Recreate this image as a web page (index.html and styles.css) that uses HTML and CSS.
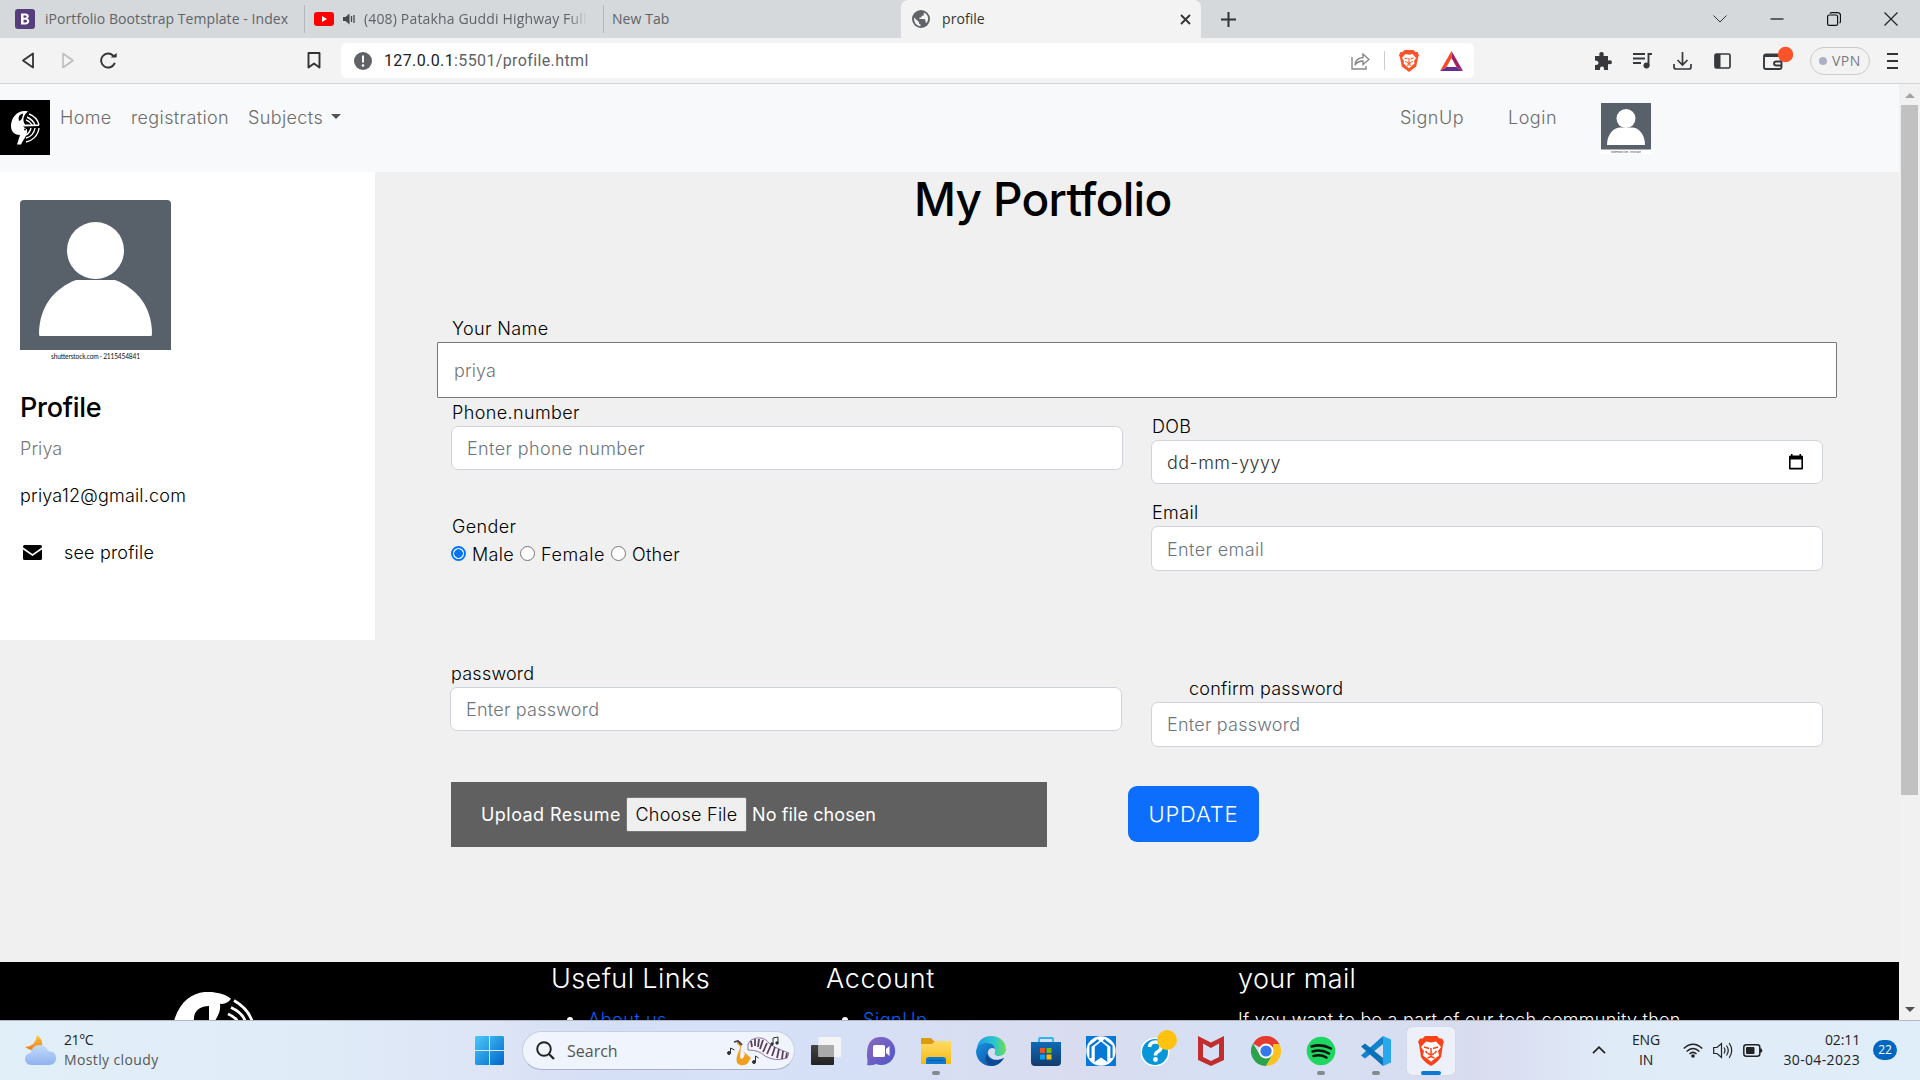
FILE: index.html
```html
<!DOCTYPE html>
<html lang="en">
<head>
<meta charset="utf-8">
<title>profile</title>
<link rel="stylesheet" href="styles.css">
</head>
<body>
<div class="tabs">
  <div class="tab tab-first">
    <svg width="20" height="20" viewBox="0 0 20 20"><rect width="20" height="20" rx="3" fill="#563d7c"/><path d="M6 4.500h4.700c3.600 0 3.900 4 1.600 5.100 3 .9 2.500 5.900-1.600 5.900H6z M8.500 6.600v2.200h2c1.500 0 1.500-2.200 0-2.200z M8.500 10.800v2.600h2.200c1.800 0 1.800-2.600 0-2.600z" fill="#fff" fill-rule="evenodd"/></svg>
    <span>iPortfolio Bootstrap Template - Index</span>
  </div>
  <div class="tab tab-video">
    <svg width="20" height="14" viewBox="0 0 20 14"><rect width="20" height="14" rx="3" fill="#f00"/><path d="M8 4l5 3-5 3z" fill="#fff"/></svg>
    <svg class="speaker" width="12" height="12" viewBox="0 0 12 12"><path d="M0 4h2.500L6.500.5v11L2.500 8H0z" fill="#45494d"/><path d="M8.500 3v6M11 2v8" stroke="#45494d" stroke-width="1.300"/></svg>
    <span class="fade">(408) Patakha Guddi Highway Full V</span>
  </div>
  <div class="tab tab-new"><span>New Tab</span></div>
  <div class="tab tab-active">
    <svg width="18" height="18" viewBox="0 0 18 18"><circle cx="9" cy="9" r="9" fill="#5f6368"/><path d="M7.500 2C6 4 9 4.500 8 6.500 7 8 5 8 5 9.500h5c1.500 0 1 2 0 2.500-1.500.8-2.500 1-2.500 4C4 15 1.800 12.300 1.800 9S4 2.700 7.500 2zM12 3q4 2 4.200 6-.2 3-2.200 5-2-1-1.500-3.500 0-2-3-2Q9 6 12 6z" fill="#f3f3f3" opacity=".0"/><path d="M2 7.500l5 4.500v1.500l1.500 1v1.800Q2.500 15.500 2 9zM12 2.500q4 2 4.200 6.200-.2 2.500-1.700 4.300l-1-.7v-2l-1-1.300H7.500V7.500h2V5.700h2z" fill="#f3f3f3"/></svg>
    <span>profile</span>
    <svg class="tab-close" width="11" height="11" viewBox="0 0 11 11"><path d="M1 1l9 9M10 1l-9 9" stroke="#333" stroke-width="1.800"/></svg>
  </div>
  <svg class="tab-plus" width="15" height="15" viewBox="0 0 15 15"><path d="M7.500 0v15M0 7.500h15" stroke="#333" stroke-width="2"/></svg>
  <div class="window-controls">
    <svg width="14" height="8" viewBox="0 0 14 8"><path d="M.5.500l6.500 6.500L13.500.5" fill="none" stroke="#333"/></svg>
    <svg width="14" height="14" viewBox="0 0 14 14"><path d="M.5 7h13" stroke="#111" stroke-width="1.200"/></svg>
    <svg width="14" height="14" viewBox="0 0 14 14"><g fill="none" stroke="#111" stroke-width="1.200"><rect x=".6" y="3" width="10" height="10.400" rx="1.500"/><path d="M3 1.500Q3.500.6 5 .6h5.500q3 0 3 3V9q0 1.500-1 2"/></g></svg>
    <svg width="14" height="14" viewBox="0 0 14 14"><path d="M.5.500l13 13M13.500.5l-13 13" stroke="#222" stroke-width="1.200"/></svg>
  </div>
</div>

<div class="toolbar">
  <svg class="t-back" width="12" height="17" viewBox="0 0 12 17"><path d="M11 1.500v14L1 8.500z" fill="none" stroke="#333" stroke-width="1.800" stroke-linejoin="round"/></svg>
  <svg class="t-forward" width="12" height="17" viewBox="0 0 12 17"><path d="M1 1.500v14l10-7z" fill="none" stroke="#bdbdbd" stroke-width="1.600" stroke-linejoin="round"/></svg>
  <svg class="t-reload" width="17" height="17" viewBox="0 0 17 17"><path d="M13 3.500A7 7 0 1 0 14.500 11.500" fill="none" stroke="#333" stroke-width="1.900" stroke-linecap="round"/><path d="M10.500 5.500H16q.7 0 .7-.7V1z" fill="#333"/></svg>
  <svg class="t-bookmark" width="14" height="17" viewBox="0 0 14 17"><path d="M1.500 1h11v14.500L7 11.500l-5.500 4z" fill="none" stroke="#333" stroke-width="1.900" stroke-linejoin="round"/></svg>
  <div class="address">
    <svg width="18" height="18" viewBox="0 0 18 18"><circle cx="9" cy="9" r="9" fill="#5f6368"/><path d="M9 3.500v7" stroke="#fff" stroke-width="2"/><circle cx="9" cy="13.500" r="1.300" fill="#fff"/></svg>
    <span class="url"><b>127.0.0.1</b>:5501/profile.html</span>
    <svg class="share" width="19" height="18" viewBox="0 0 19 18"><path d="M1 5v12h14v-3M4 13q1-7 8-7.500V2l6 5.500-6 5V9q-5 0-8 4z" fill="none" stroke="#888" stroke-width="1.400"/></svg>
    <i class="bar"></i>
    <svg width="20" height="22" viewBox="0 0 20 22"><path d="M5.500 0h9l2 2h2l1.500 3-.8 2-2 9.500L10 22l-7.200-5.500L.8 7 0 5l1.500-3h2z" fill="#fb542b"/><path d="M6.500 4l3.500.8 3.500-.8 3.500 4-2 3 .5 2.500L11.500 17 10 18.200 8.500 17l-4-3.500L5 11 3 8z" fill="#fff"/><path d="M5.500 8l3 1M14.500 8l-3 1M10 8v5M8 12.500l2 1.200 2-1.200M6.500 11l1 1.500M13.500 11l-1 1.500M8 15.500l2-1 2 1" fill="none" stroke="#fb542b" stroke-width="1.100"/></svg>
    <svg class="bat" width="23" height="20" viewBox="0 0 23 20"><path d="M11.500 0L0 20l6.500-4 5-9z" fill="#ff4724"/><path d="M11.500 0L23 20l-6.500-4-5-9z" fill="#9e1f63"/><path d="M0 20h23l-6.500-4h-10z" fill="#662d91"/></svg>
  </div>
  <svg class="t-puzzle" width="18" height="18" viewBox="0 0 18 18"><path d="M1 4h4.500q-1-4 2-4t2 4H14v4.500q4-1 4 1.800T14 12v6h-4q.5-3.500-2-3.500T6 18H1v-5q3.500.5 3.500-2T1 8.500z" fill="#36393c"/></svg>
  <svg class="t-playlist" width="19" height="17" viewBox="0 0 19 17"><path d="M0 2h12M0 6.500h12M0 11h8M15.500 14V2H19" fill="none" stroke="#36393c" stroke-width="1.900"/><circle cx="13.500" cy="13.500" r="3" fill="#36393c"/></svg>
  <svg class="t-download" width="19" height="18" viewBox="0 0 19 18"><path d="M9.500 0v12.500M4.500 8l5 5 5-5M1 12v3q0 2 2 2h13q2 0 2-2v-3" fill="none" stroke="#36393c" stroke-width="1.700"/></svg>
  <svg class="t-sidebar" width="17" height="16" viewBox="0 0 17 16"><rect x="1" y="1" width="15" height="14" rx="1.500" fill="none" stroke="#36393c" stroke-width="1.700"/><path d="M1 1h5.500v14H1z" fill="#36393c"/></svg>
  <svg class="t-wallet" width="30" height="30" viewBox="0 0 30 30"><path d="M16 8.500H3q-2 0-2 2V21q0 2 2 2h13.500q2 0 2-2v-9q0-2-2-2H2M19 15.500h-5.500q-2.500 0-2.500 2t2.500 2H19" fill="none" stroke="#36393c" stroke-width="1.900"/><circle cx="22.500" cy="8.500" r="7.700" fill="#fb542b"/></svg>
  <div class="vpn"><i></i>VPN</div>
  <svg class="t-menu" width="11" height="18" viewBox="0 0 11 18"><path d="M0 2h11M0 9h11M0 16h11" stroke="#333" stroke-width="1.800"/></svg>
</div>

<div class="viewport">
  <div class="page">
    <nav class="nav">
      <svg class="brand" width="50" height="55" viewBox="0 0 50 55"><path d="M0 0h50v55H0z"/><path d="M28 11.500c-9-2.500-17 5-17 14.500 0 6 4 9 9 9l-3 9.500h4c3-6 7-10 6-15l-4-3 16-.5v-1.500h-14c-2-3-3-8 3-13z" fill="#fff"/><path d="M19 21c-1-4 0-6.500 4-7.500 0 2-1 7-4 7.500z"/><path d="M29 14c5 2 9 6 10 11M27 17c4 2 7 5 8 8M26 20c3 1 5 3 6 5M39 28c-1 8-7 13-13 14M35 28c-1 6-5 9-9 10M31 28c-1 4-3 6-5 7" fill="none" stroke="#fff" stroke-width="1.400"/><circle cx="25" cy="29.500" r=".9"/></svg>
      <a class="n-home">Home</a>
      <a class="n-reg">registration</a>
      <a class="n-sub">Subjects</a><i class="caret"></i>
      <a class="n-signup">SignUp</a>
      <a class="n-login">Login</a>
      <svg class="nav-avatar" width="50" height="51" viewBox="0 0 50 51"><path d="M0 0h50v51H0z" fill="#fff"/><path d="M0 0h50v46.500H0z" fill="#58606a"/><circle cx="25" cy="15.500" r="9.500" fill="#fff"/><path d="M6 42C6 30 14 24.500 19 24.500h12c6 0 13 6 13 17.500z" fill="#fff"/><text x="25" y="49.500" font-size="2.200" font-weight="400" letter-spacing="0" text-anchor="middle" textLength="30" fill="#333">shutterstock.com · 2115454841</text></svg>
    </nav>
    <main class="main">
      <aside class="card">
        <svg class="photo" width="151" height="161" viewBox="0 0 151 161"><path d="M0 4q0-4 4-4h143q4 0 4 4v146H0z" fill="#58606a"/><circle cx="75.500" cy="50.500" r="28.500" fill="#fff"/><path d="M19 134c0-28 16-46 37-54h39c21 8 37 26 37 54q0 2-1 2H20q-1 0-1-2z" fill="#fff"/><text x="75.500" y="159" font-family="Lato, sans-serif" font-size="6.600" font-weight="400" letter-spacing="0" text-anchor="middle" textLength="89" fill="#111">shutterstock.com · 2115454841</text></svg>
        <h5>Profile</h5>
        <p class="muted">Priya</p>
        <p class="mail">priya12@gmail.com</p>
        <p class="see"><svg width="19" height="15" viewBox="0 0 19 15"><path d="M1.500 0h16Q19 0 19 1.500v.7L9.500 9 0 2.200v-.7Q0 0 1.500 0z"/><path d="M0 4.500l9.500 6.500L19 4.500v9q0 1.500-1.500 1.500h-16Q0 15 0 13.500z"/></svg><span>see profile</span></p>
      </aside>
      <form class="form">
        <h1>My Portfolio</h1>
        <label>Your Name</label>
        <div class="input name">priya</div>
        <div class="row row-a">
          <div>
            <label>Phone.number</label>
            <div class="input">Enter phone number</div>
            <label class="gender">Gender</label>
            <div class="radios"><i class="radio on"></i><span>Male</span><i class="radio"></i><span class="fem">Female</span><i class="radio"></i><span>Other</span></div>
          </div>
          <div class="lower">
            <label>DOB</label>
            <div class="input date"><span>dd-mm-yyyy</span><svg width="14" height="16" viewBox="0 0 14 16"><path d="M0 3q0-1.500 1-1.500h1V0h1.500v1.500h7V0H12v1.500h1q1 0 1 1.500v11.500q0 1-1 1H1q-1 0-1-1zM1.600 5.500v8.300h10.800V5.500z" fill-rule="evenodd"/></svg></div>
            <label class="email">Email</label>
            <div class="input tall">Enter email</div>
          </div>
        </div>
        <div class="row row-b">
          <div class="pw"><label>password</label><div class="input">Enter password</div></div>
          <div class="lower"><label class="confirm">confirm password</label><div class="input tall">Enter password</div></div>
        </div>
        <div class="actions">
          <div class="upload"><span class="u-label">Upload Resume</span><span class="choose">Choose File</span><span class="none">No file chosen</span></div>
          <div class="update">UPDATE</div>
        </div>
      </form>
    </main>
    <footer class="footer">
      <svg class="foot-logo" width="80" height="28" viewBox="0 0 80 28"><path d="M0 29C7 4 26-3 42 .8q9 1 15 6-4 6-11 5c1 7-2 12-5 17h-6V14c-9 0-16 5-15 15z" fill="#fff"/><path d="M60 8.500q14 8 18 20.500M57 15.500q11 5 14 13M54 22q7 3 9 6.500" fill="none" stroke="#fff" stroke-width="2.800"/></svg>
      <div class="f-links"><h4>Useful Links</h4><ul><li>About us</li></ul></div>
      <div class="f-account"><h4>Account</h4><ul><li>SignUp</li></ul></div>
      <div class="f-mail"><h4>your mail</h4><p>If you want to be a part of our tech community then</p></div>
    </footer>
  </div>
  <div class="scroll"><i class="up"></i><i class="thumb"></i><i class="down"></i></div>
</div>

<div class="taskbar">
  <svg class="weather" width="31" height="30" viewBox="0 0 31 30"><defs><linearGradient id="moon" x2="0" y2="1"><stop stop-color="#fcc93c"/><stop offset="1" stop-color="#ee7b1d"/></linearGradient><linearGradient id="cloud" x2="0" y2="1"><stop stop-color="#c4dbf8"/><stop offset="1" stop-color="#8fb2ee"/></linearGradient></defs><path d="M12 0q8 6 4 13-5 6-16-1 11-1 12-12z" fill="url(#moon)"/><path d="M6 30a6 6 0 0 1 0-12q1-8 9-8 6 0 8 6 8 0 8 7t-7 7z" fill="url(#cloud)"/></svg>
  <div class="weather-text"><span class="deg">21°C</span><span class="sky">Mostly cloudy</span></div>
  <svg class="win" width="29" height="29" viewBox="0 0 29 29"><defs><linearGradient id="win" x2="1" y2="1"><stop stop-color="#4cc8fb"/><stop offset="1" stop-color="#0067c9"/></linearGradient></defs><path d="M1 0h13v14H0V1zM15 0h13l1 1v13H15zM0 15h14v14H1l-1-1zM15 15h14v13l-1 1H15z" fill="url(#win)"/></svg>
  <div class="search">
    <svg width="19" height="19" viewBox="0 0 19 19"><circle cx="8" cy="8" r="6.800" fill="none" stroke="#222" stroke-width="1.900"/><path d="M13 13l5 5" stroke="#222" stroke-width="2.200"/></svg>
    <span>Search</span>
    <svg class="art" width="63" height="30" viewBox="0 0 63 30"><path d="M10 6q4 0 4 4l-1 11q2 5 5-3l-2-3 8 7q-2 2-3 5-3 3-8 2-5-2-3-9l3-8q0-3-3-4z" fill="#f0a01e"/><path d="M7 6l4-1 4 4" fill="none" stroke="#47394f" stroke-width="1.800"/><path d="M21 8q2-5 8-6 8-1 12 4t21 11l-2 5q-12 4-22-2-6-6-17-6z" fill="#f7f2fb" stroke="#8c78a0"/><path d="M24 5l1 6M28 3v7M32 3l-1 8M36 4l-3 9M40 7l-4 9M44 9l-4 9M48 11l-3 9M52 13l-2 9M56 15l-1 8M60 17l-1 5" stroke="#54405f" stroke-width="1.800"/><g fill="#333" stroke="#333"><circle cx="2" cy="17" r="1.500"/><path d="M3.500 17v-5l4 2" fill="none"/><circle cx="27" cy="26" r="1.500"/><path d="M28.500 26v-6l3 2" fill="none"/><circle cx="45" cy="8" r="1.200"/><circle cx="50" cy="7" r="1.200"/><path d="M46 8V2l5-1v6" fill="none"/></g></svg>
  </div>
  <div class="apps">
    <div class="app"><svg viewBox="0 0 30 30"><defs><linearGradient id="dk" x2="0" y2="1"><stop stop-color="#444"/><stop offset="1" stop-color="#222"/></linearGradient></defs><rect y="9" width="23" height="20" rx="1" fill="url(#dk)"/><rect x="7.500" y="1" width="22.500" height="20" rx="1" fill="#f4f4f4" opacity=".95"/><path d="M7.500 9H23v12H7.500z" fill="#aaa"/></svg></div>
    <div class="app"><svg viewBox="0 0 30 30"><defs><linearGradient id="ch" x2="1" y2="1"><stop stop-color="#8a68c0"/><stop offset="1" stop-color="#4f55c8"/></linearGradient></defs><path d="M15 1a14 14 0 1 1-5 27q-4 2-9 1 1-4 0-8Q0 1 15 1z" fill="url(#ch)"/><rect x="7" y="9" width="12" height="12" rx="1.500" fill="#fff"/><path d="M20 13l3.500-3v10L20 17z" fill="#fff"/></svg></div>
    <div class="app run"><svg viewBox="0 0 30 30"><defs><linearGradient id="fo" x2="0" y2="1"><stop stop-color="#ffdc67"/><stop offset="1" stop-color="#f6b912"/></linearGradient></defs><path d="M0 3q0-1 1-1h9l3 3h16q1 0 1 1v6H0z" fill="#dd9a0c"/><path d="M0 8h11l3-3h16v23H0z" fill="url(#fo)"/><path d="M5 28v-4q0-3 3-3h14q3 0 3 3v4z" fill="#0f78d0"/><path d="M8 24.500h14" stroke="#05579f"/></svg></div>
    <div class="app"><svg viewBox="0 0 30 30"><defs><linearGradient id="e1" x2="1"><stop stop-color="#1f9de4"/><stop offset=".6" stop-color="#2cc5ce"/><stop offset="1" stop-color="#6de04e"/></linearGradient><linearGradient id="e2" x2="1" y2="1"><stop stop-color="#1790e0"/><stop offset="1" stop-color="#0c4a9c"/></linearGradient></defs><path d="M1 12C2 4 8 0 15 0c9 0 15 6 15 13 0 5-4 7-7 7-4 0-5-2-4-4 2-7-9-11-18-4z" fill="url(#e1)"/><path d="M0 15C1 9 6 7 10 7c7 0 9 4 9 6-4-3-8 1-7 5 1 5 9 8 16 4-3 5-7 8-13 8C6 30 0 23 0 15z" fill="url(#e2)"/><path d="M12 18c-1 5 6 9 16 4-4 6-9 8-13 8-5-3-8-8-3-12z" fill="#0e4a94"/></svg></div>
    <div class="app"><svg viewBox="0 0 30 30"><defs><linearGradient id="st" x2="0" y2="1"><stop stop-color="#0b6bb8"/><stop offset="1" stop-color="#153a6b"/></linearGradient></defs><path d="M8 8V3q0-1 1-1h12q1 0 1 1v5" fill="none" stroke="#2cb6ef" stroke-width="1.800"/><path d="M0 6h30v20q0 4-4 4H4q-4 0-4-4z" fill="url(#st)"/><path d="M9 12h5v5H9z" fill="#f25022"/><path d="M15.500 12h5v5h-5z" fill="#7fba00"/><path d="M9 18.500h5v5H9z" fill="#00a4ef"/><path d="M15.500 18.500h5v5h-5z" fill="#ffb900"/></svg></div>
    <div class="app"><svg viewBox="0 0 30 30"><path d="M0 0h30v30H0z" fill="#0678d8"/><circle cx="15" cy="15" r="14.700" fill="#fff"/><path d="M8.500 26V10l6.500-5 6.500 5v16L15 21.500z" fill="#0678d8"/><path d="M4.500 22V10l8-6M25.500 22V10l-8-6" fill="none" stroke="#0678d8" stroke-width="2.200"/><path d="M8 25V11l7-6 7 6v14" fill="none" stroke="#fff"/></svg></div>
    <div class="app"><svg viewBox="0 0 30 30"><circle cx="14" cy="16" r="14.500" fill="#fff"/><circle cx="14" cy="16" r="13" fill="#0797d8"/><path d="M8.500 11q.5-5 6-5t5.500 5q0 3-3 4.500-2.500 1-2.500 4" fill="none" stroke="#fff" stroke-width="3.500"/><circle cx="14.500" cy="23.500" r="2.400" fill="#fff"/></svg><i class="note"></i></div>
    <div class="app"><svg viewBox="0 0 30 30"><path d="M2 0l13 6.500L28 0v24l-13 6-13-6zM7 7.500V21l8 4 8-4V7.500L15 12z" fill="#c12d2f" fill-rule="evenodd"/></svg></div>
    <div class="app"><svg viewBox="0 0 30 30"><path d="M2 7.500a15 15 0 0 1 26 0L15 15z" fill="#e33b2e"/><path d="M2 7.500A15 15 0 0 0 15 30l6.500-11L15 15 8.500 18z" fill="#2ba24c"/><path d="M28 7.500A15 15 0 0 1 15 30l7-12V7.500z" fill="#fcc31e"/><path d="M15 7.500h13" stroke="#e33b2e"/><circle cx="15" cy="15" r="7.500" fill="#fff"/><circle cx="15" cy="15" r="5.600" fill="#3478ec"/></svg></div>
    <div class="app run"><svg viewBox="0 0 30 30"><circle cx="15" cy="15" r="14.300" fill="#1ed760"/><path d="M5.500 10.500q10-3 19.500 2M6.500 15.500q9-2.500 16.500 2M7.500 20q7-2 13 1.500" fill="none" stroke="#111" stroke-width="2.500" stroke-linecap="round"/></svg></div>
    <div class="app run"><svg viewBox="0 0 30 30"><path d="M22 0v8L4 22.500 0 19.500z" fill="#1382cc"/><path d="M22 30v-8L4 7.500 0 10.500z" fill="#0971b8"/><path d="M22 0l8 3.500v23L22 30z" fill="#29a8ee"/></svg></div>
    <div class="app run active"><svg viewBox="0 0 30 30"><path d="M9 0h12l2.500 2.500H26L28 6l-1 2-2 13q-3 5-10 9Q8 26 5 21L3 8 2 6l2-3.500h2.500z" fill="#fb421b"/><path d="M10 5.500l5 1 5-1 5 5.500-3 4 1 4.500L17 24l-2 1.800L13 24l-6-4.500L8 15l-3-4z" fill="#fff"/><path d="M8 11l5 1.500M22 11l-5 1.500M15 12v6M12 17.500l3 1.700 3-1.700M9.500 15l2 2.500M20.500 15l-2 2.500M11.500 22l3.500-1.500 3.500 1.500" fill="none" stroke="#fb421b" stroke-width="1.500"/></svg></div>
  </div>
  <div class="tray">
    <svg width="14" height="8" viewBox="0 0 14 8"><path d="M1 7.200l6-6 6 6" fill="none" stroke="#222" stroke-width="1.700"/></svg>
    <div class="lang"><span>ENG</span><span>IN</span></div>
    <svg class="wifi" width="20" height="15" viewBox="0 0 20 15"><path d="M.8 5.500q9.200-8.500 18.400 0M3.600 8.500q6.400-6 12.800 0M6.500 11q3.500-3.200 7 0" fill="none" stroke="#222" stroke-width="1.500"/><circle cx="10" cy="13" r="1.800" fill="#222"/></svg>
    <svg class="vol" width="20" height="17" viewBox="0 0 20 17"><path d="M.7 5.500H4l4.500-4v14L4 11.500H.7zM11 5.500q2 3 0 6M13.500 3.500q3.500 5 0 10M16.200 1q5 7.500 0 15" fill="none" stroke="#222" stroke-width="1.200"/></svg>
    <svg class="battery" width="20" height="13" viewBox="0 0 20 13"><rect x=".8" y=".8" width="16" height="11.400" rx="2.500" fill="none" stroke="#222" stroke-width="1.500"/><rect x="3" y="3" width="8.500" height="7" rx="1" fill="#222"/><path d="M17 4.500h1.500q1.500 2 0 4H17z" fill="#222"/></svg>
    <div class="clock"><span class="time">02:11</span><span class="day">30-04-2023</span></div>
    <div class="badge">22</div>
  </div>
</div>
</body>
</html>
```
FILE: styles.css
```css
* { box-sizing: border-box; }
body { margin: 0; width: 1920px; height: 1080px; overflow: hidden; display: flex; flex-direction: column; background: #f0f0f0; color: #000; font-family: Inter, "Liberation Sans", sans-serif; font-size: 18px; font-weight: 300; letter-spacing: .38px; line-height: 26px; }
svg { display: block; flex: none; }
h1, h4, h5, p, ul { margin: 0; padding: 0; }

/* browser tabs */
.tabs, .toolbar, .taskbar { font-family: "Open Sans", "Noto Sans", sans-serif; font-weight: 400; font-size: 14px; letter-spacing: .06px; line-height: 20px; white-space: nowrap; }
.tabs { height: 38px; flex: none; display: flex; align-items: center; background: #d5d9dc; color: #5f6368; }
.tab { display: flex; align-items: center; height: 28px; }
.tab-first { width: 305px; padding-left: 15px; gap: 10px; border-right: 1px solid #b4b8bb; }
.tab-video { width: 299px; padding-left: 9px; border-right: 1px solid #b4b8bb; }
.speaker { margin: 0 9px; }
.fade { width: 223px; overflow: hidden; letter-spacing: .16px; -webkit-mask-image: linear-gradient(90deg, #000 92%, transparent); mask-image: linear-gradient(90deg, #000 92%, transparent); }
.tab-new { width: 297px; padding-left: 8px; }
.tab-active { height: 38px; width: 300px; background: #f3f3f3; color: #333; padding: 0 10px 0 11px; border-radius: 7px 7px 0 0; }
.tab-active span { margin-left: 12px; }
.tab-close { margin-left: auto; }
.tab-plus { margin-left: 20px; }
.window-controls { margin-left: auto; margin-right: 22px; display: flex; gap: 43px; align-items: center; }

/* browser toolbar */
.toolbar { height: 46px; flex: none; display: flex; align-items: center; background: #f3f3f3; border-bottom: 1px solid #d2d3d4; }
.t-back { margin-left: 22px; }
.t-forward { margin-left: 28px; }
.t-reload { margin-left: 26px; }
.t-bookmark { margin-left: 190px; }
.address { margin-left: 20px; width: 1133px; height: 35px; padding: 0 11px 0 13px; border-radius: 5px; background: #fff; display: flex; align-items: center; }
.url { margin-left: 12px; font-family: Roboto, "Open Sans", sans-serif; font-size: 16px; letter-spacing: .38px; color: #5f6368; }
.url b { font-weight: 400; color: #202124; }
.share { margin-left: auto; }
.bar { width: 1px; height: 19px; background: #ccc; margin: 0 14px; }
.bat { margin-left: 21px; }
.t-puzzle { margin-left: 120px; }
.t-playlist, .t-download { margin-left: 21px; }
.t-sidebar { margin-left: 22px; }
.t-wallet { margin-left: 32px; }
.vpn { margin-left: 17px; width: 60px; height: 28px; border: 1px solid #c9cacc; border-radius: 14px; display: flex; align-items: center; gap: 5px; padding-left: 8px; color: #777b80; letter-spacing: .5px; }
.vpn i { width: 8px; height: 8px; border-radius: 50%; background: #aeb1c4; }
.t-menu { margin-left: 17px; }

/* page */
.viewport { height: 936px; flex: none; display: flex; overflow: hidden; }
.page { width: 1899px; display: flex; flex-direction: column; }
.nav { height: 88px; flex: none; background: #f8f9fb; display: flex; align-items: flex-start; color: #6c6c6c; padding-top: 16px; }
.nav a { margin-top: 5px; line-height: 26px; }
.n-home { width: 71px; margin-left: 10px; }
.n-reg { width: 117px; }
.n-sub { width: 83px; }
.caret { margin-top: 14px; border: 5px solid transparent; border-top-color: #555; border-bottom: 0; }
.n-signup { margin-left: 1059px; width: 108px; letter-spacing: .48px; }
.n-login { width: 93px; letter-spacing: .5px; }
.nav-avatar { margin-top: 3px; }
.main { height: 790px; flex: none; display: grid; grid-template-columns: 375px 1fr; align-items: start; }
.card { height: 468px; background: #fff; padding: 28px 20px; }
.card h5 { margin: 27px 0 0; font-size: 27px; line-height: 40px; font-weight: 500; letter-spacing: -.3px; }
.card p { letter-spacing: .2px; }
.card .muted { margin-top: 8px; color: #777; letter-spacing: .08px; }
.card .mail { margin-top: 21px; }
.card .see { margin-top: 31px; padding-left: 3px; display: flex; align-items: center; gap: 22px; letter-spacing: .19px; }
.card .see svg { margin-top: -1px; }
.form { padding: 0 76px; }
.form h1 { padding-left: 463px; font-size: 46px; line-height: 54px; margin-bottom: 89px; font-weight: 500; letter-spacing: -.7px; }
.form label { display: block; height: 27px; padding: 1px 0 0 1px; }
.input { height: 44px; border: 1px solid #ced4da; border-radius: 7px; background: #fff; padding: 0 14px 0 15px; line-height: 43px; color: #6c757d; }
.tall { height: 45px; line-height: 45px; }
.name { height: 56px; margin: 0 -14px; border: 1px solid #767676; border-radius: 1px; padding: 0 16px; line-height: 56px; letter-spacing: .11px; color: #757575; }
.row { display: grid; grid-template-columns: 672px 672px; gap: 28px; align-items: start; }
.row-a { height: 252px; padding-top: 1px; }
.row-b { height: 132px; padding-top: 10px; letter-spacing: .23px; }
.row-b .tall { line-height: 43px; }
.lower { padding-top: 14px; }
.row-b .lower { padding-top: 15px; }
.pw { margin: 0 1px 0 -1px; }
.form .gender { margin-top: 43px; }
.form .email { margin-top: 15px; }
.form .confirm { padding-left: 38px; }
.date { display: flex; align-items: center; justify-content: space-between; color: #333; padding: 0 19px 0 15px; }
.date span { letter-spacing: .46px; }
.radios { display: flex; align-items: center; height: 28px; margin-top: 1px; }
.radios span { margin: 0 6px; letter-spacing: .3px; }
.radios .fem { letter-spacing: .58px; }
.radio { width: 15px; height: 15px; margin-top: -4px; border: 1px solid #767676; border-radius: 50%; background: #fff; }
.radio.on { border: 2px solid #0075ff; background: radial-gradient(#0075ff 0 4px, #fff 4.600px); }
.actions { display: flex; align-items: flex-start; }
.upload { width: 596px; height: 65px; background: #606060; color: #fff; display: flex; align-items: center; padding-left: 30px; font-weight: 400; }
.u-label { width: 145px; letter-spacing: .45px; }
.choose { width: 121px; height: 35px; border: 1px solid #767676; border-radius: 2px; background: #efefef; color: #000; text-align: center; line-height: 34px; font-weight: 300; letter-spacing: .25px; margin-right: 5px; }
.none { letter-spacing: .1px; }
.update { margin: 4px 0 0 81px; width: 131px; height: 56px; border-radius: 9px; background: #0d6efd; color: #fff; font-size: 22px; line-height: 57px; text-align: center; letter-spacing: .8px; font-weight: 300; }
.footer { flex: 1; background: #000; color: #fff; display: flex; align-items: flex-start; overflow: hidden; }
.foot-logo { margin: 30px 0 0 174px; }
.footer h4 { font-weight: 300; font-size: 27px; line-height: 34px; letter-spacing: .4px; height: 45px; }
.f-links { margin-left: 297px; width: 275px; }
.f-account { width: 412px; }
.footer .f-account h4 { letter-spacing: .7px; }
.f-mail p { letter-spacing: .26px; }
.footer ul { padding-left: 37px; list-style: none; }
.footer li { color: #0d5efd; display: flex; letter-spacing: .55px; }
.footer li::before { content: ""; width: 6px; height: 6px; border-radius: 50%; background: #fff; margin: 10px 15px 0 -21px; }

/* scroll bar */
.scroll { width: 21px; background: #f1f1f1; display: flex; flex-direction: column; align-items: center; padding: 9px 0 8px; }
.scroll i { border: 5px solid transparent; }
.scroll .up { border-top: 0; border-bottom-color: #a3a3a3; }
.scroll .thumb { width: 17px; height: 690px; background: #c1c1c1; border: 0; margin-top: 7px; }
.scroll .down { margin-top: auto; border-bottom: 0; border-top-color: #505050; }

/* taskbar */
.taskbar { height: 60px; flex: none; display: flex; align-items: center; border-top: 1px solid #b3b7c3; color: #222; background: linear-gradient(90deg, #e1eff8 0, #e0ebf8 17%, #dce4f5 26%, #d4def5 32%, #d7e1f7 38%, #d5e0f6 43%, #d9dcef 56%, #d5e0f4 65%, #d9dcef 77%, #e0ebf8 84%, #e0eef9 100%); }
.weather { margin-left: 25px; margin-top: -2px; }
.weather-text { margin: -1px 0 0 8px; width: 411px; display: flex; flex-direction: column; color: #575757; letter-spacing: .38px; }
.deg { color: #222; letter-spacing: -.4px; }
.search { margin-left: 18px; width: 273px; height: 39px; border-radius: 20px; background: #f0f4fc; border: 1px solid #c9cfe2; border-bottom-color: #a9afc4; display: flex; align-items: center; padding: 0 4px 0 13px; color: #555; font-size: 16px; letter-spacing: 0; }
.search span { margin-left: 12px; }
.art { margin-left: auto; }
.apps { margin-left: 7px; display: flex; gap: 7px; }
.app { width: 48px; height: 48px; padding: 9px; border-radius: 5px; position: relative; }
.app svg { width: 30px; height: 30px; }
.app.run::after { content: ""; position: absolute; left: 20px; bottom: 0; width: 8px; height: 4px; border-radius: 2px; background: #858992; }
.app.active { background: #edf0f8; box-shadow: 0 0 1px #bbb; }
.app.active::after { left: 14px; width: 20px; background: #0a78d4; }
.note { position: absolute; right: 3px; top: 3px; width: 20px; height: 20px; border-radius: 50%; background: #ffc20e; }
.tray { margin-left: auto; margin-right: 23px; display: flex; align-items: center; margin-top: -1px; }
.lang, .clock { display: flex; flex-direction: column; }
.lang { width: 30px; margin-left: 25px; align-items: center; letter-spacing: -.17px; }
.wifi { margin-left: 22px; }
.vol, .battery { margin-left: 10px; }
.clock { align-items: flex-end; width: 97px; }
.time { letter-spacing: -.14px; }
.day { letter-spacing: .35px; }
.badge { margin-left: 13px; width: 24px; height: 20px; border-radius: 10px; background: #0067c0; color: #fff; font-size: 12px; text-align: center; letter-spacing: 0; }
```
